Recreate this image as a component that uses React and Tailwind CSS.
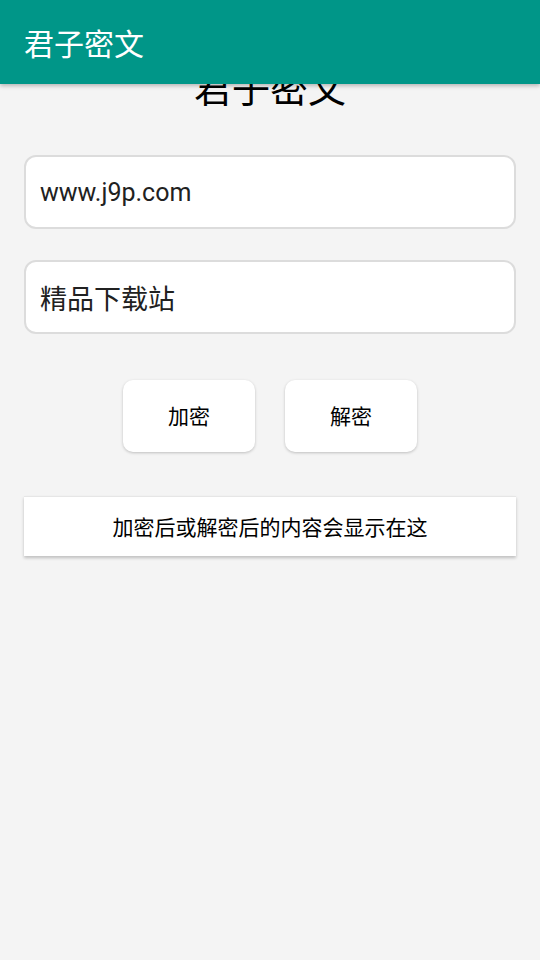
export default function App() {
  const font = { fontFamily: '"Noto Sans CJK SC", Roboto, "Noto Sans", sans-serif' }

  return (
    <div className="w-[540px] h-[960px] bg-[#f4f4f4] overflow-hidden flex flex-col" style={font}>
      {/* toolbar sits over the top of the scrolled content */}
      <header className="relative z-10 h-[84px] shrink-0 bg-[#009688] flex items-center px-6 shadow-[0_2px_4px_rgba(0,0,0,0.25)]">
        <h1 className="text-white text-[30px] leading-none font-normal">君子密文</h1>
      </header>

      <main className="-mt-[17px] flex flex-col px-6">
        <h2 className="text-center text-black text-[38px] leading-[38px] font-normal">君子密文</h2>

        <div className="mt-[50px] h-[74px] bg-white border-2 border-[#dcdcdc] rounded-[12px] flex items-center px-[14px]">
          <span className="text-[#212121] text-[25px] leading-none" style={{ fontFamily: 'Roboto, "Noto Sans CJK SC", sans-serif' }}>www.j9p.com</span>
        </div>

        <div className="mt-[31px] h-[74px] bg-white border-2 border-[#dcdcdc] rounded-[12px] flex items-center px-[14px]">
          <span className="text-[#212121] text-[27px] leading-none">精品下载站</span>
        </div>

        <div className="mt-[46px] flex justify-center gap-[30px]">
          <button className="w-[132px] h-[72px] bg-white rounded-[10px] shadow-[0_1px_3px_rgba(0,0,0,0.22)] text-black text-[21px]">加密</button>
          <button className="w-[132px] h-[72px] bg-white rounded-[10px] shadow-[0_1px_3px_rgba(0,0,0,0.22)] text-black text-[21px]">解密</button>
        </div>

        <div className="mt-[44px] h-[60px] bg-white border-t border-[#e6e6e6] shadow-[0_2px_3px_rgba(0,0,0,0.22)] flex items-center justify-center">
          <span className="text-black text-[21px] leading-none">加密后或解密后的内容会显示在这</span>
        </div>
      </main>
    </div>
  )
}
